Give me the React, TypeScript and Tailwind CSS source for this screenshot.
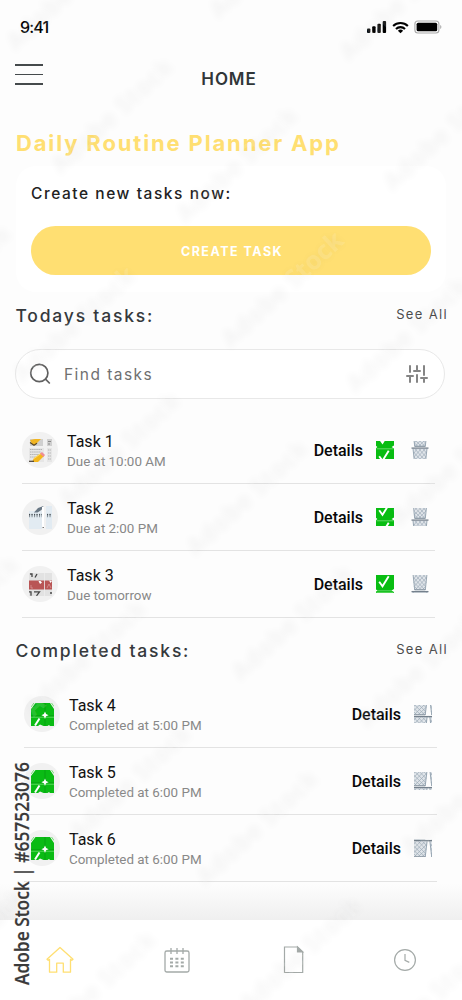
import type { ReactNode } from "react";

type Task = {
  name: string;
  note: string;
  tileY: number;
};

const todays: Task[] = [
  { name: "Task 1", note: "Due at 10:00 AM", tileY: 6 },
  { name: "Task 2", note: "Due at 2:00 PM", tileY: 11 },
  { name: "Task 3", note: "Due tomorrow", tileY: 15.5 },
];

const completed: Task[] = [
  { name: "Task 4", note: "Completed at 5:00 PM", tileY: 10.5 },
  { name: "Task 5", note: "Completed at 6:00 PM", tileY: 14.5 },
  { name: "Task 6", note: "Completed at 6:00 PM", tileY: 0.5 },
];

function CheckTile({ y }: { y: number }) {
  const tile = (
    <>
      <rect x="0" y="0" width="18" height="18" rx="1" fill="#08bd12" />
      <path d="M0.5 1.8h17" stroke="#6fdc70" strokeWidth="0.9" />
      <path d="M3.2 9.2l3.3 4.6 6.2-10" fill="none" stroke="#fff" strokeWidth="1.9" />
      <path d="M18 -1.6l-2.4 1.6 2.4 1.6zM0 -1l1.4 1L0 1z" fill="#fff" />
    </>
  );
  return (
    <svg width="18" height="18" viewBox="0 0 18 18" className="overflow-hidden">
      <g transform={`translate(0 ${y - 18})`}>{tile}</g>
      <g transform={`translate(0 ${y})`}>{tile}</g>
    </svg>
  );
}

function Basket() {
  return (
    <>
      <path d="M2 1.5h14l-1.7 16H3.7z" fill="#dfe4e9" />
      <path
        d="M2.5 5l11 12M4 2l10.5 12M8 2l7 8M12 2l3.5 4M3 10l7 7M3.5 14l3 3M15.5 5l-11 12M14 2L3.2 14M10 2L3 10M6 2L3 6M15 10l-7 7M14.5 14l-3 3"
        stroke="#9ba9b6"
        strokeWidth="0.65"
      />
      <path d="M2 1.5l1.7 16M16 1.5l-1.7 16" stroke="#91a0ae" strokeWidth="0.9" />
      <path d="M3.7 17.3h10.6" stroke="#7e8c99" strokeWidth="1" />
      <path d="M0.5 1.1h17" stroke="#74808c" strokeWidth="1.3" />
    </>
  );
}

function TrashTile({ x = 0, y, wide = 1 }: { x?: number; y: number; wide?: number }) {
  return (
    <svg width="18" height="18" viewBox="0 0 18 18" className="overflow-hidden">
      {[0, 16.5].map((dx) =>
        [0, -18].map((dy) => (
          <g key={`${dx}/${dy}`} transform={`translate(${x + dx * wide} ${y + dy}) scale(${wide} 1)`}>
            {(dx === 0 || wide > 1) && <Basket />}
          </g>
        ))
      )}
    </svg>
  );
}

function MemoArt() {
  return (
    <svg width="23" height="23" viewBox="0 0 23 23">
      <path d="M1 0h13v7H1zM18 0h5v7h-5z" fill="#d0d0d0" />
      <path d="M0 9h15v14H0zM18 9h5v14h-5z" fill="#e6e6e6" />
      <path d="M1 10.5h12M1 13h11M1 15.5h9M1 18h6M19 11h3M19 14h3M19 17h3M19 20h3" stroke="#a6a6a6" strokeWidth="0.8" strokeDasharray="1.5 .6" />
      <path d="M19 2.5h3M19 5h2" stroke="#888" strokeWidth="1" />
      <path d="M1 1l5-1h6L6 6 3 5z" fill="#f1b522" />
      <path d="M1 3.5l4 2.7 3-2" fill="none" stroke="#5d4924" strokeWidth="1.2" />
      <path d="M3 23l2-4 7-5 3 3-6 6z" fill="#f4b71d" />
      <path d="M5 19.5l7-5" stroke="#ffdd69" strokeWidth="1" />
      <path d="M11 14.5l2-1.5 3 3-1.5 2z" fill="#ef8e95" />
      <path d="M0 22.3h5" stroke="#494037" strokeWidth="1.2" />
    </svg>
  );
}

function NotepadArt() {
  return (
    <svg width="23" height="23" viewBox="0 0 23 23">
      <path d="M0 5h13v18H0zM17 0h6v23h-6z" fill="#e2ebf2" />
      <path d="M0 9.5h14M18 9.5h5" stroke="#8a949b" strokeWidth="3.6" strokeDasharray="1.1 1.4" />
      <path d="M0 8.6h14M18 8.6h5" stroke="#475057" strokeWidth="1.4" strokeDasharray="1.1 1.4" />
      <path d="M5 6.5L9 2l5.5-2-2 4-4 2.5z" fill="#687784" />
      <path d="M14 1v19l1 2" fill="none" stroke="#fff" strokeWidth="2" />
      <path d="M13.5 21.5h1.5" stroke="#777" />
    </svg>
  );
}

function CalendarArt() {
  return (
    <svg width="23" height="23" viewBox="0 0 23 23">
      <rect width="23" height="23" fill="#e2e2e2" />
      <path d="M0 7.5h23v9H0z" fill="#b95555" />
      <path d="M15.5 0v23" stroke="#eee" strokeWidth="0.8" />
      <path d="M2 12v3h2M18 15l2-4 2 4" fill="none" stroke="#dd9d9d" strokeWidth="0.7" />
      <path d="M9.5 8l1.5 3 2-1.5L11.5 8zM20 7.5l1.5 2.5L23 8z" fill="#fff" />
      <path d="M1 1h2v3M8 1L6 4.5M0 18.8h2v4M5 18.8h5.5l-3 4M21 20h2" fill="none" stroke="#454545" strokeWidth="1.3" />
    </svg>
  );
}

function DoneArt() {
  return (
    <svg width="23" height="23" viewBox="0 0 23 23">
      <path d="M4.5 0H19l4 6v17h-4L18 22l-1.5 1h-4L9 21.5 7 23H0V6z" fill="#0abb14" />
      <path d="M0 4l3-4M20.5 0L23 3.5" stroke="#66dc68" strokeWidth="0.9" />
      <path d="M0 14.2h23" stroke="#66dc68" strokeWidth="0.9" />
      <path d="M14 0v23M0 12.8h23" stroke="#079a10" strokeWidth="0.7" />
      <path d="M4 22.5l4.5-7" stroke="#fff" strokeWidth="2" />
      <path d="M14 8.5l1.1 2.6 2.5 1.1-2.5 1.1-1.1 2.6-1.1-2.6-2.5-1.1 2.5-1.1z" fill="#fff" />
    </svg>
  );
}

const art = [<MemoArt />, <NotepadArt />, <CalendarArt />];

function TaskRow({ task, icon, children }: { task: Task; icon: ReactNode; children: ReactNode }) {
  return (
    <li className="flex h-[67px] items-center border-b border-[#e3e3e3]">
      <div className="flex size-9 shrink-0 items-center justify-center rounded-full bg-[#f1f1f1]">{icon}</div>
      <div className="ml-[9px] flex-1 pt-1 font-[Roboto]">
        <p className="text-base leading-5 text-[#111]">{task.name}</p>
        <p className="text-[13.4px] leading-5 text-[#888]">{task.note}</p>
      </div>
      <button className="pt-px font-[Roboto] text-base font-medium text-[#080808]">Details</button>
      {children}
    </li>
  );
}

function SectionHead({ title }: { title: string }) {
  return (
    <div className="flex items-center justify-between pr-[14px] pl-[15.5px]">
      <h2 className="text-[17.5px] leading-6 font-medium tracking-[1.8px] text-[#35393c]">{title}</h2>
      <a className="-mt-1 text-[13px] leading-5 tracking-[1.35px] text-[#4c4c4c]">See All</a>
    </div>
  );
}

function StatusBar() {
  return (
    <div className="flex h-[54px] items-center justify-between pr-[20px] pl-5">
      <span className="text-[16px] font-medium tracking-[-0.8px] text-black">9:41</span>
      <div className="flex items-center gap-[5px]">
        <svg width="20" height="12" viewBox="0 0 20 12">
          <rect x="0" y="7.5" width="3.4" height="4.5" rx="1" />
          <rect x="5.2" y="5.3" width="3.4" height="6.7" rx="1" />
          <rect x="10.4" y="2.8" width="3.4" height="9.2" rx="1" />
          <rect x="15.7" y="0" width="3.4" height="12" rx="1" />
        </svg>
        <svg width="17" height="13" viewBox="0 0 18 13" fill="none" stroke="#000" strokeWidth="2.2">
          <path d="M1.2 4.9a11.2 11.2 0 0 1 15.6 0M4.2 8a7 7 0 0 1 9.6 0" />
          <path d="M9 12.7L6.2 10a4 4 0 0 1 5.6 0z" fill="#000" stroke="none" />
        </svg>
        <svg width="28" height="14" viewBox="0 0 28 14">
          <rect x="0.9" y="1" width="24" height="12" rx="3" fill="none" stroke="#aaa" strokeWidth="1.1" />
          <rect x="2.6" y="2.7" width="20.6" height="8.6" rx="1.6" />
          <path d="M26.2 5v4c1.6-.7 1.6-3.3 0-4z" fill="#aaa" />
        </svg>
      </div>
    </div>
  );
}

function BottomNav() {
  return (
    <nav className="flex h-20 items-center justify-between bg-white pr-[45px] pl-[46px]">
      <svg width="28" height="28" viewBox="0 0 28 28" fill="none" stroke="#ffdf72" strokeWidth="1.3" strokeLinejoin="round">
        <path d="M1 13.2L14 1.5l13 11.7-1.2 1.1-1.3-1V26.2h-7.2v-9h-6.6v9H3.5V13.3l-1.3 1z" />
      </svg>
      <svg width="26" height="28" viewBox="0 0 26 28" className="ml-[2px]" fill="none" stroke="#a4aaa8" strokeWidth="1.3">
        <rect x="1" y="5" width="24" height="21" rx="1.8" />
        <path d="M7 2v6M13 2v6M19 2v6" />
        <path d="M6 12.7h14M6 16.5h14M6 20.3h14" strokeWidth="2" strokeDasharray="3 2.4" />
      </svg>
      <svg width="22" height="30" viewBox="0 0 22 30" className="ml-[5px]" fill="none" stroke="#a4aaa8" strokeWidth="1.2">
        <path d="M1.5 2h13l5.2 5v20.5H1.5z" />
        <path d="M14.5 2v5h5.2z" fill="#a4aaa8" />
      </svg>
      <svg width="24" height="24" viewBox="0 0 24 24" fill="none" stroke="#a4aaa8" strokeWidth="1.2">
        <circle cx="12" cy="12" r="10.4" />
        <path d="M12 6v6.4l4.3 2" />
      </svg>
    </nav>
  );
}

// baseline start of every diagonal mark
const marks = [
  [10, 50], [55, 173], [17, 382], [62, 507], [28, 715], [73, 840], [38, 1046],
  [213, 18], [180, 222], [225, 347], [190, 555], [235, 680], [200, 885], [243, 1012],
  [343, 60], [387, 190], [350, 392], [395, 525], [362, 727], [405, 855], [370, 1058],
  [-107, 340], [-99, 671], [-92, 1004],
];

function Watermark() {
  return (
    <div className="pointer-events-none absolute inset-0 overflow-hidden">
      {marks.map(([x, y]) => (
        <span
          key={`${x}-${y}`}
          className="absolute origin-bottom-left -rotate-[43deg] font-['Open_Sans'] text-[25.5px] leading-6 font-bold whitespace-nowrap text-white/15 [text-shadow:0_0_7px_rgba(0,0,0,0.04)]"
          style={{ left: x + 7, top: y - 20 }}
        >
          Adobe Stock
        </span>
      ))}
      <span className="absolute top-[985px] left-[10px] w-[222px] origin-top-left -rotate-90 font-['Open_Sans'] text-[19.5px] leading-6 font-semibold whitespace-nowrap text-[#3a3a3a] [text-shadow:0_0_3px_#fff,0_0_3px_#fff]">
        <span className="inline-block origin-left scale-x-[0.89] [-webkit-text-stroke:0.2px_#3a3a3a]">Adobe Stock | #657523076</span>
      </span>
    </div>
  );
}

export default function App() {
  return (
    <div className="relative flex h-[1000px] w-[462px] flex-col overflow-hidden bg-[#fdfdfd] font-[Inter,sans-serif]">
      <StatusBar />
      <header className="grid h-[50px] grid-cols-[1fr_auto_1fr] items-center px-[15px]">
        <button className="-mt-[9px] flex w-7 flex-col gap-2">
          <span className="h-[1.6px] bg-[#454a4c]" />
          <span className="h-[1.6px] bg-[#454a4c]" />
          <span className="h-[1.6px] bg-[#454a4c]" />
        </button>
        <h1 className="-ml-1 pt-[2px] text-[17px] font-semibold tracking-[0.9px] text-[#303638]">HOME</h1>
      </header>

      <h2 className="mt-6 pl-4 text-[22px] leading-[30px] font-bold tracking-[1.85px] whitespace-nowrap text-[#ffdf72]">
        Daily Routine Planner App
      </h2>
      <section className="mx-4 mt-2 h-[126px] rounded-[20px] bg-white px-[15px] pt-[18px]">
        <p className="text-[15.5px] leading-5 font-medium tracking-[1.55px] text-[#222]">Create new tasks now:</p>
        <button className="mt-[22px] flex h-[49px] w-[400px] items-center justify-center rounded-full bg-[#ffdf72] pt-1 pl-0.5 text-[12.5px] font-bold tracking-[1.5px] text-white">
          CREATE TASK
        </button>
      </section>

      <div className="mt-3">
        <SectionHead title="Todays tasks:" />
      </div>
      <div className="mt-[21px] mr-[17px] ml-[15px] flex h-[50px] items-center rounded-full border border-[#e8e8e8] bg-white pr-4 pl-[13px]">
        <svg width="22" height="22" viewBox="0 0 22 22" fill="none" stroke="#606060" strokeWidth="1.7">
          <circle cx="10.3" cy="10" r="8.6" />
          <path d="M16.5 16.2l4.3 4.3" />
        </svg>
        <span className="ml-[13px] flex-1 pt-px text-[15.5px] tracking-[1.45px] text-[#707070]">Find tasks</span>
        <svg width="22" height="20" viewBox="0 0 22 20" stroke="#858585" strokeWidth="2" strokeLinecap="round">
          <path d="M4 2v6M4 12v6M1 12h6M11 2v5M11 11v7M8 7h6M18 2v9M18 15v3M15 14h6" />
        </svg>
      </div>

      <ul className="mt-[18px] ml-[22px] w-[413px]">
        {todays.map((t, i) => (
          <TaskRow key={t.name} task={t} icon={art[i]}>
            <div className="mr-[6px] ml-[12.5px] flex gap-[17.5px]">
              <CheckTile y={t.tileY} />
              <TrashTile y={t.tileY} />
            </div>
          </TaskRow>
        ))}
      </ul>

      <div className="mt-[21px]">
        <SectionHead title="Completed tasks:" />
      </div>
      <ul className="mt-[18px] ml-6 w-[413px]">
        {completed.map((t) => (
          <TaskRow key={t.name} task={t} icon={<DoneArt />}>
            <div className="mr-[5px] ml-[13px]">
              <TrashTile x={-4.5} y={t.tileY} wide={1.1} />
            </div>
          </TaskRow>
        ))}
      </ul>

      <div className="mt-auto h-9 bg-linear-to-b from-[#fdfdfd] to-[#efefef]" />
      <BottomNav />
      <Watermark />
    </div>
  );
}
